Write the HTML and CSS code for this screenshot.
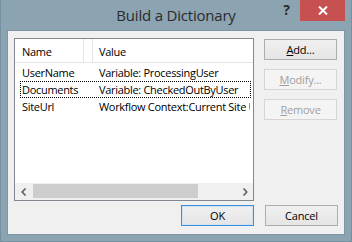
FILE: index.html
```html
<!DOCTYPE html>
<html lang="en">
<head>
    <meta charset="UTF-8">
    <title>Build a Dictionary</title>
    <link rel="stylesheet" href="styles.css">
</head>
<body>
    <div class="window">
        <!-- Barra de titulo -->
        <div class="titlebar">
            <span></span>
            <span class="title">Build a Dictionary</span>
            <div class="caption-buttons">
                <span class="help">?</span>
                <span class="close">
                    <svg width="10" height="9" viewBox="0 0 10 9"><path d="M1 0.5 L9 8.5 M9 0.5 L1 8.5" stroke="#fff" stroke-width="2"/></svg>
                </span>
            </div>
        </div>

        <div class="client">
            <div class="top-row">
                <!-- Lista -->
                <div class="listbox">
                    <div class="list-header">
                        <div class="hcell name">Name</div>
                        <div class="hcell gap"></div>
                        <div class="hcell value">Value</div>
                    </div>
                    <div class="list-rows">
                        <div class="row"><span class="cell-name">UserName</span><span class="cell-value">Variable: ProcessingUser</span></div>
                        <div class="row focused"><span class="cell-name">Documents</span><span class="cell-value">Variable: CheckedOutByUser</span></div>
                        <div class="row"><span class="cell-name">SiteUrl</span><span class="cell-value">Workflow Context:Current Site URL</span></div>
                    </div>
                    <div class="hscroll">
                        <span class="arrow">
                            <svg width="6" height="8" viewBox="0 0 6 8"><path d="M4.5 0.5 L1.2 4 L4.5 7.5" fill="none" stroke="#606060" stroke-width="1.6"/></svg>
                        </span>
                        <span class="thumb"></span>
                        <span class="track"></span>
                        <span class="arrow">
                            <svg width="6" height="8" viewBox="0 0 6 8"><path d="M1.5 0.5 L4.8 4 L1.5 7.5" fill="none" stroke="#606060" stroke-width="1.6"/></svg>
                        </span>
                    </div>
                </div>

                <div class="side-buttons">
                    <button class="btn"><u>A</u>dd...</button>
                    <button class="btn" disabled><u>M</u>odify...</button>
                    <button class="btn" disabled><u>R</u>emove</button>
                </div>
            </div>

            <div class="bottom-row">
                <button class="btn default">OK</button>
                <button class="btn">Cancel</button>
            </div>
        </div>
    </div>
</body>
</html>
```

FILE: styles.css
```css
body {
    margin: 0;
    font-family: "Open Sans", "Noto Sans", sans-serif;
}

.window {
    width: 352px;
    height: 242px;
    box-sizing: border-box;
    background-color: #8ca4b2;
    border: 1px solid #7590a0;
    border-top-color: #8ca4b2;
    display: flex;
    flex-direction: column;
}

/* Barra de titulo */
.titlebar {
    height: 29px;
    display: grid;
    grid-template-columns: minmax(0, 1fr) auto minmax(0, 1fr);
    align-items: start;
}

.title {
    font-size: 15px;
    color: #2b2b2b;
    margin-top: 4px;
    letter-spacing: -0.2px;
}

.caption-buttons {
    display: flex;
    justify-content: flex-end;
    align-items: flex-start;
    margin-top: -1px;
    margin-right: 6px;
}

.help {
    font-size: 14px;
    font-weight: bold;
    color: #2b2b2b;
    margin-top: 2px;
    margin-right: 10px;
    line-height: 16px;
}

.close {
    width: 45px;
    height: 21px;
    background-color: #c75050;
    display: flex;
    align-items: center;
    justify-content: center;
}

/* Area do cliente */
.client {
    margin: 0 6px 6px 6px;
    flex: 1;
    background-color: #f0f0f0;
    border: 1px solid #7c96a5;
    padding: 7px 6px 8px 6px;
    display: flex;
    flex-direction: column;
}

.top-row {
    display: flex;
    gap: 10px;
}

.listbox {
    width: 240px;
    height: 163px;
    box-sizing: border-box;
    border: 1px solid #828790;
    background-color: #fff;
    display: flex;
    flex-direction: column;
    font-size: 11px;
    letter-spacing: -0.3px;
    color: #000;
}

.list-header {
    display: flex;
    height: 23px;
    border-bottom: 1px solid #e5e5e5;
    flex-shrink: 0;
}

.hcell {
    line-height: 25px;
    white-space: nowrap;
    box-sizing: border-box;
}

.hcell.name {
    width: 69px;
    padding-left: 7px;
    border-right: 1px solid #e5e5e5;
}

.hcell.gap {
    width: 9px;
    border-right: 1px solid #e5e5e5;
}

.hcell.value {
    padding-left: 6px;
}

.list-rows {
    flex: 1;
    margin-top: 1px;
}

.row {
    display: flex;
    height: 15px;
    line-height: 15px;
    margin: 0 2px 0 5px;
    border: 1px dotted transparent;
    white-space: nowrap;
    overflow: hidden;
}

.row.focused {
    border-color: #000;
}

.cell-name {
    width: 78px;
    flex-shrink: 0;
    padding-left: 1px;
    box-sizing: border-box;
}

.hscroll {
    height: 17px;
    display: flex;
    background-color: #f0f0f0;
    flex-shrink: 0;
}

.arrow {
    width: 17px;
    display: flex;
    align-items: center;
    justify-content: center;
}

.thumb {
    width: 165px;
    margin: 1px 0 2px 1px;
    background-color: #cdcdcd;
}

.track {
    flex: 1;
}

.side-buttons {
    display: flex;
    flex-direction: column;
    gap: 9px;
    margin-top: 1px;
}

.btn {
    width: 73px;
    height: 21px;
    box-sizing: border-box;
    border: 1px solid #adadad;
    background: linear-gradient(#f0f0f0, #e5e5e5);
    font-family: "Open Sans", "Noto Sans", sans-serif;
    font-size: 11px;
    letter-spacing: -0.2px;
    color: #000;
    padding: 0;
}

.btn:disabled {
    border-color: #d5d5d5;
    background: #f4f4f4;
    color: #a0a0a0;
}

.btn.default {
    border-color: #3c8fd6;
    box-shadow: inset 0 0 0 1px #cfe3f5;
}

.bottom-row {
    display: flex;
    justify-content: flex-end;
    gap: 11px;
    margin-top: 4px;
}
```
